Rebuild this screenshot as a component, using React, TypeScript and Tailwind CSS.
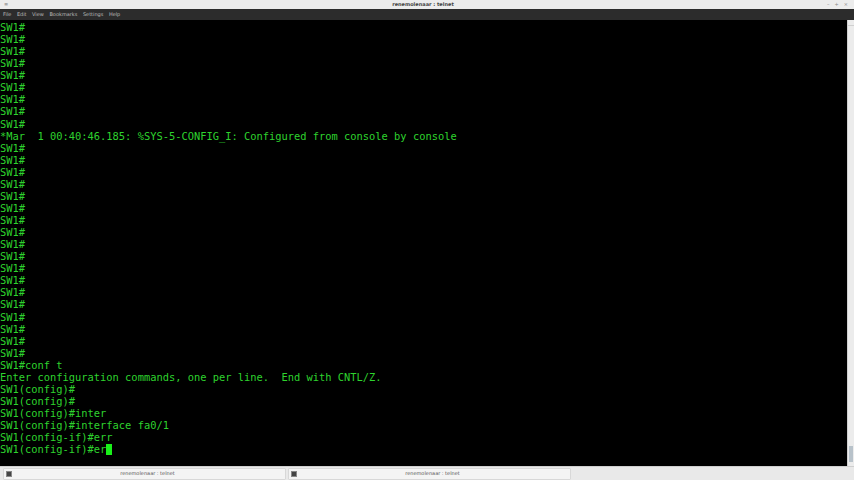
import React from 'react';

const lines: string[] = [
  ...Array(9).fill('SW1#'),
  '*Mar  1 00:40:46.185: %SYS-5-CONFIG_I: Configured from console by console',
  ...Array(18).fill('SW1#'),
  'SW1#conf t',
  'Enter configuration commands, one per line.  End with CNTL/Z.',
  'SW1(config)#',
  'SW1(config)#',
  'SW1(config)#inter',
  'SW1(config)#interface fa0/1',
  'SW1(config-if)#err',
];

const menus = ['File', 'Edit', 'View', 'Bookmarks', 'Settings', 'Help'];

const TaskButton: React.FC<{ label: string }> = ({ label }) => (
  <div className="flex items-center w-[283px] h-[12px] bg-[#f4f4f4] border border-[#d8d8d8] rounded-[1px] px-[2px]">
    <div className="w-[6px] h-[6px] bg-[#444] border border-[#888]" />
    <span className="flex-1 text-center text-[5px] text-[#555]">{label}</span>
  </div>
);

const App: React.FC = () => {
  return (
    <div className="w-[854px] h-[480px] flex flex-col bg-black overflow-hidden font-['DejaVu_Sans',sans-serif]">
      {/* title bar */}
      <div className="h-[9px] bg-[#ececec] flex items-center relative shrink-0">
        <span className="absolute left-[4px] text-[5px] text-[#777]">≡</span>
        <span className="flex-1 text-center text-[5px] text-[#444] font-semibold pr-[8px]">renemolenaar : telnet</span>
        <div className="absolute right-[6px] flex gap-[5px] text-[5px] text-[#888]">
          <span>–</span>
          <span>+</span>
          <span>×</span>
        </div>
      </div>
      {/* menu bar */}
      <div className="h-[11px] bg-[#2c2c2c] flex items-center gap-[5.5px] pl-[3px] shrink-0">
        {menus.map((m) => (
          <span key={m} className="text-[5px] text-[#bbbbbb]">{m}</span>
        ))}
      </div>
      {/* terminal */}
      <div className="flex flex-1 min-h-0">
        <div className="flex-1 bg-black pt-[1px] font-['DejaVu_Sans_Mono',monospace] text-[10.4px] leading-[12.06px] text-[#2ed32e] whitespace-pre">
          {lines.map((l, i) => (
            <div key={i}>{l}</div>
          ))}
          <div className="flex items-center">
            <span>SW1(config-if)#er</span>
            <span className="inline-block w-[6px] h-[11px] bg-[#19f019]" />
          </div>
        </div>
        <div className="w-[7px] bg-[#ececec] flex flex-col justify-between border-l border-[#cfcfcf]">
          <div className="h-[6px] border-b border-[#d0d0d0]" />
          <div className="h-[16px] bg-[#b8c2ca] mx-[1px] mb-[4px]" />
        </div>
      </div>
      {/* taskbar */}
      <div className="h-[14px] bg-[#e9e9e9] border-t border-[#cfcfcf] flex items-center gap-[2px] px-[3px] shrink-0">
        <TaskButton label="renemolenaar : telnet" />
        <TaskButton label="renemolenaar : telnet" />
      </div>
    </div>
  );
};

export default App;
